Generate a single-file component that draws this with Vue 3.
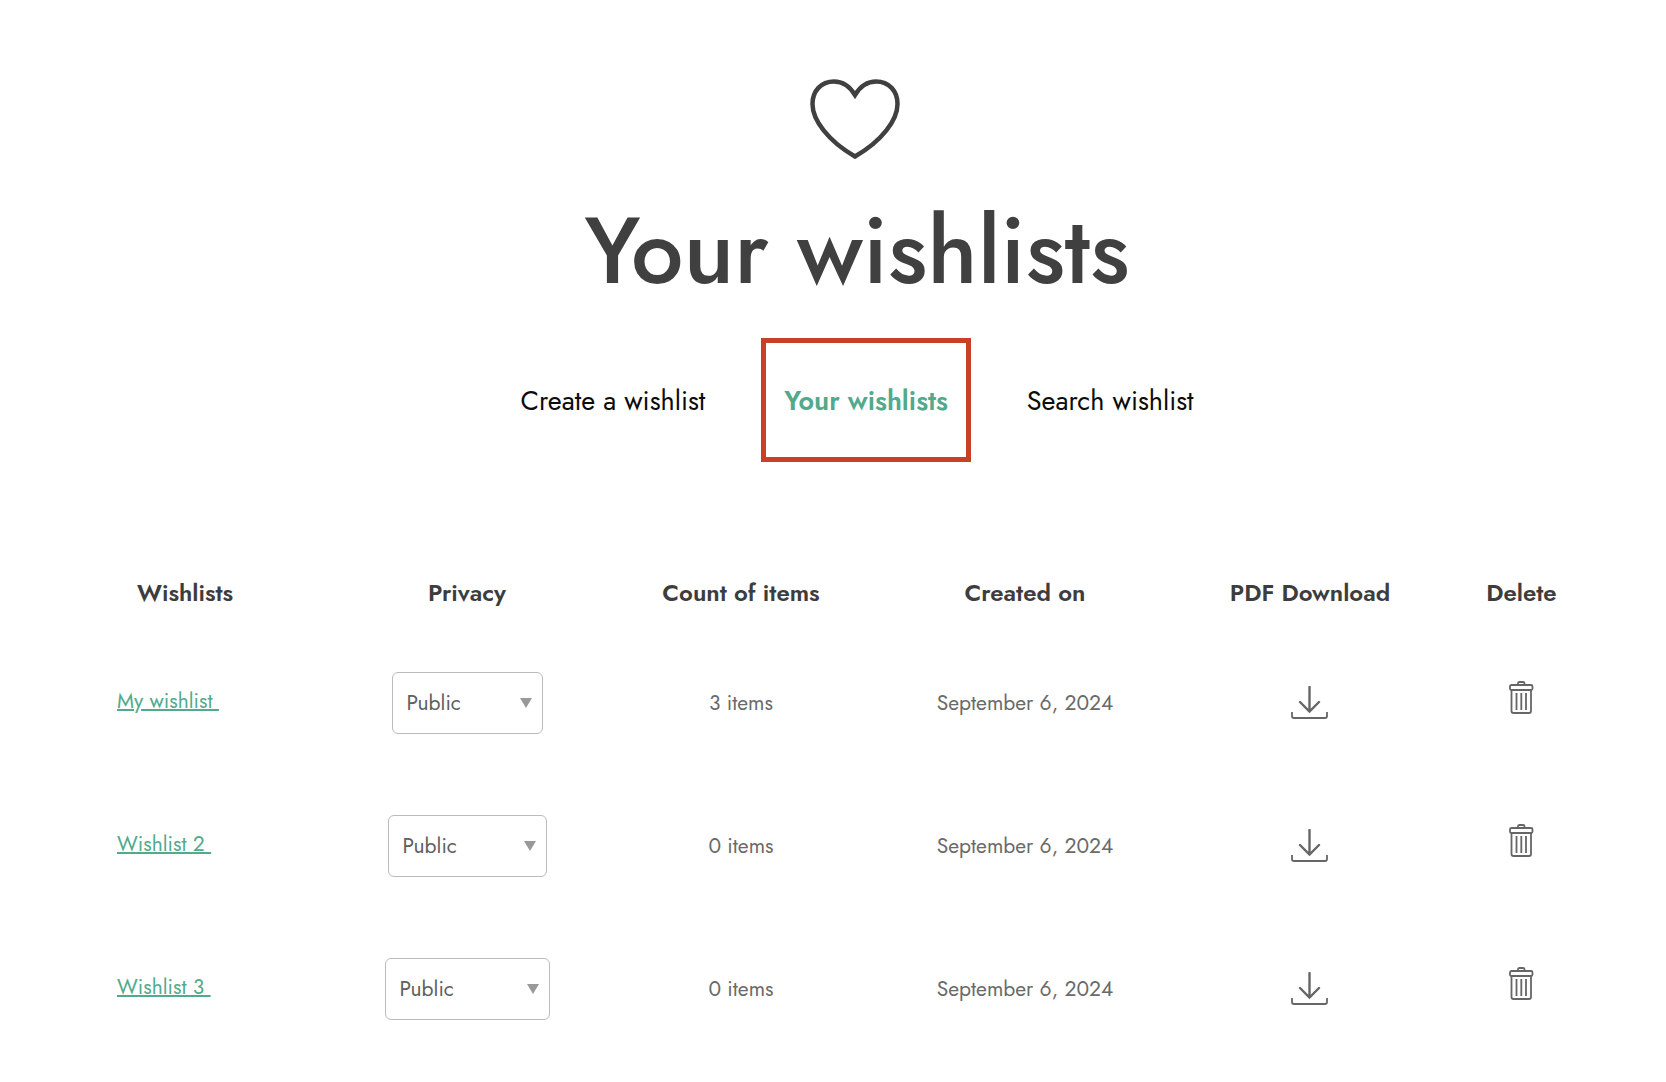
<template>
  <main class="page">
    <header class="hero">
      <svg class="heart" viewBox="0 0 94 80" aria-hidden="true">
        <path d="M45 16 C39 6 31 2.500 24 2.500 C11 2.500 2.500 12 2.500 25 C2.500 41 18 62 45 77.500 C72 62 87.500 41 87.500 25 C87.500 12 79 2.500 66 2.500 C59 2.500 51 6 45 16 Z" />
      </svg>
      <h1>Your wishlists</h1>
      <nav class="tabs">
        <a v-for="tab in tabs" :key="tab" href="#" :class="{ active: tab === activeTab }"
          @click.prevent="activeTab = tab">{{ tab }}</a>
      </nav>
    </header>

    <table class="wishlists">
      <thead>
        <tr>
          <th class="name">Wishlists</th>
          <th class="privacy">Privacy</th>
          <th class="count">Count of items</th>
          <th class="created">Created on</th>
          <th class="pdf">PDF Download</th>
          <th class="delete">Delete</th>
        </tr>
      </thead>
      <tbody>
        <tr v-for="list in wishlists" :key="list.id">
          <td class="link-cell"><a href="#">{{ list.name }}&nbsp;</a></td>
          <td>
            <div class="select" :style="{ width: list.selectWidth + 'px' }">
              <select v-model="list.privacy" :aria-label="'Privacy of ' + list.name">
                <option>Public</option>
                <option>Shared</option>
                <option>Private</option>
              </select>
            </div>
          </td>
          <td>{{ list.count }} items</td>
          <td>{{ list.createdAt }}</td>
          <td>
            <button :aria-label="'Download ' + list.name">
              <svg class="download" viewBox="0 0 38 34">
                <path class="arrow" d="M18.500 1 V25.500 M9 16 L18.500 25.500 L28 16" />
                <path d="M1 26 V30 Q1 32 3 32 H34 Q36 32 36 30 V26" />
              </svg>
            </button>
          </td>
          <td class="delete-cell">
            <button :aria-label="'Delete ' + list.name">
              <svg class="trash" viewBox="0 0 25 34">
                <rect x="1" y="4" width="22.500" height="5" rx="1.500" />
                <path d="M9 4 V2.500 Q9 1 10.500 1 H14 Q15.500 1 15.500 2.500 V4" />
                <path d="M2.500 9 V30 Q2.500 32 4.500 32 H20 Q22 32 22 30 V9" />
                <path d="M7.500 12 V29 M12.300 12 V29 M17 12 V29" />
              </svg>
            </button>
          </td>
        </tr>
      </tbody>
    </table>
  </main>
</template>

<script setup>
import { ref } from 'vue'

const tabs = ['Create a wishlist', 'Your wishlists', 'Search wishlist']
const activeTab = ref('Your wishlists')

const wishlists = ref([
  { id: 1, name: 'My wishlist', privacy: 'Public', count: 3, createdAt: 'September 6, 2024', selectWidth: 151 },
  { id: 2, name: 'Wishlist 2', privacy: 'Public', count: 0, createdAt: 'September 6, 2024', selectWidth: 159 },
  { id: 3, name: 'Wishlist 3', privacy: 'Public', count: 0, createdAt: 'September 6, 2024', selectWidth: 165 }
])
</script>

<style>
body {
  background: #fff;
}
</style>

<style scoped>
.page {
  font-family: Jost, Lato, sans-serif;
  font-size: 21px;
  color: #6a6a6a;
  padding: 79px 66px 0 45px;
}

.hero {
  display: flex;
  flex-direction: column;
  align-items: center;
  padding-left: 69px;
}

.heart {
  width: 94px;
  height: 80px;
  fill: none;
  stroke: #404040;
  stroke-width: 4.500;
}

h1 {
  margin: 32px 0 0;
  font-size: 93px;
  line-height: 120px;
  font-weight: 500;
  color: #404040;
}

.tabs {
  display: flex;
  align-items: baseline;
  gap: 56px;
  margin-top: 27px;
}

.tabs a {
  font-size: 27px;
  line-height: 32px;
  color: #0c0c0c;
  text-decoration: none;
}

.tabs a.active {
  padding: 42px 18px 40px;
  border: 5px solid #c93f27;
  font-weight: 600;
  color: #52aa8c;
}

.wishlists {
  width: 100%;
  margin-top: 92px;
  table-layout: fixed;
  border-collapse: collapse;
  text-align: center;
}

th {
  height: 77px;
  padding: 0;
  font-size: 24px;
  line-height: 32px;
  font-weight: 600;
  color: #3d3d3d;
}

/* proportions of the full table width */
th.name {
  width: 280px;
}

th.privacy {
  width: 284px;
}

th.count {
  width: 264px;
}

th.created {
  width: 304px;
}

th.pdf {
  width: 266px;
}

th.delete {
  width: 157px;
}

td {
  box-sizing: border-box;
  height: 143px;
  padding: 0;
}

.link-cell {
  padding: 0 0 4px 72px;
  text-align: left;
}

.link-cell a {
  color: #52aa8c;
  text-decoration: underline;
  text-decoration-thickness: 2px;
}

.select {
  position: relative;
  display: inline-block;
  vertical-align: middle;
}

.select::after {
  content: '';
  position: absolute;
  right: 11px;
  top: 26px;
  border: 6px solid transparent;
  border-top: 10px solid #999;
  border-bottom: 0;
  pointer-events: none;
}

select {
  appearance: none;
  display: block;
  width: 100%;
  height: 62px;
  padding: 0 14px;
  border: 1px solid #bbb;
  border-radius: 6px;
  background: #fff;
  font: inherit;
  color: #606060;
}

button {
  display: inline-block;
  vertical-align: middle;
  padding: 0;
  border: 0;
  background: none;
  cursor: pointer;
}

button svg {
  display: block;
  fill: none;
  stroke: #666;
  stroke-width: 1.800;
}

.download {
  width: 38px;
  height: 34px;
}

.download .arrow {
  stroke-width: 2.400;
  stroke-linecap: round;
}

.delete-cell {
  padding-bottom: 10px;
}

.trash {
  width: 25px;
  height: 34px;
}
</style>
